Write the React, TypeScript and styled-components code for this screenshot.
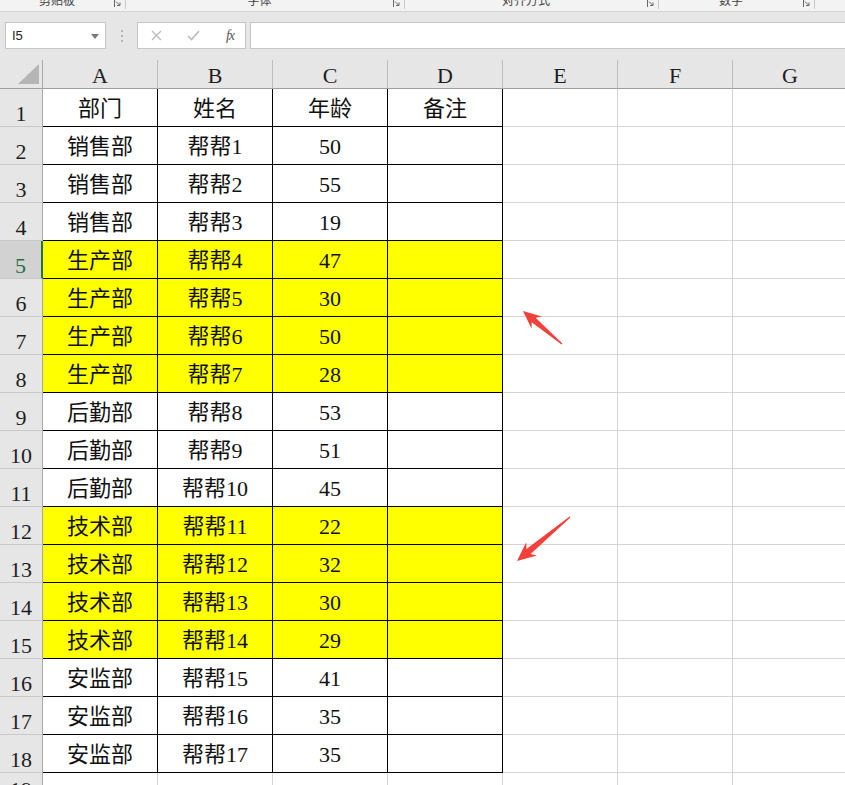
import React from "react";
import styled, { createGlobalStyle } from "styled-components";

const GlobalStyle = createGlobalStyle`
  html, body { margin: 0; padding: 0; background: #ffffff; overflow: hidden; }
  * { box-sizing: border-box; }
`;

const SERIF = `"Liberation Serif", "Noto Sans CJK SC", serif`;
const CJK = `"Noto Sans CJK SC", "Liberation Sans", sans-serif`;

const Page = styled.div`
  position: relative;
  width: 845px;
  height: 785px;
  overflow: hidden;
  background: #fff;
`;

/* ---------- ribbon strip ---------- */
const Ribbon = styled.div`
  display: flex;
  height: 12px;
  background: #f3f3f3;
  border-bottom: 1px solid #d5d5d5;
  overflow: hidden;
`;

const RibbonGroup = styled.div<{ $w: number }>`
  display: flex;
  align-items: flex-start;
  width: ${(p) => p.$w}px;
  flex: none;
  border-right: 1px solid #c8c8c8;
  height: 9px;
  padding-right: 4px;
`;

const GroupLabel = styled.div`
  flex: 1;
  text-align: center;
  font-family: ${CJK};
  font-size: 12px;
  line-height: 12px;
  color: #444;
  margin-top: -6px;
`;

const Launcher = styled.svg`
  width: 7px;
  height: 8px;
  flex: none;
`;

/* ---------- formula bar ---------- */
const FormulaBar = styled.div`
  display: flex;
  align-items: flex-start;
  height: 48px;
  padding: 10px 0 0 5px;
  background: #e6e6e6;
`;

const NameBox = styled.div`
  display: flex;
  align-items: center;
  justify-content: space-between;
  width: 101px;
  height: 27px;
  background: #fff;
  border: 1px solid #c6c6c6;
  padding: 0 6px 0 6px;
  font-family: "Liberation Sans", sans-serif;
  font-size: 13px;
  color: #222;
  flex: none;
`;

const DropArrow = styled.span`
  width: 0;
  height: 0;
  border-left: 4px solid transparent;
  border-right: 4px solid transparent;
  border-top: 5px solid #7a7a7a;
  margin-top: 1px;
`;

const Dots = styled.div`
  display: flex;
  flex-direction: column;
  gap: 3px;
  width: 31px;
  align-items: center;
  padding-top: 8px;
  flex: none;
`;

const Dot = styled.span`
  width: 2px;
  height: 2px;
  background: #b4b4b4;
`;

const FxBox = styled.div`
  display: flex;
  align-items: center;
  justify-content: space-between;
  width: 109px;
  height: 27px;
  background: #fff;
  border: 1px solid #c6c6c6;
  padding: 0 11px 0 13px;
  flex: none;
`;

const FxText = styled.span`
  font-family: ${SERIF};
  font-style: italic;
  font-size: 14px;
  color: #555;
  letter-spacing: -1px;
`;

const FormulaInput = styled.div`
  flex: 1;
  height: 27px;
  margin-left: 4px;
  background: #fff;
  border: 1px solid #c6c6c6;
  border-right: none;
`;

/* ---------- sheet ---------- */
const Sheet = styled.div`
  display: grid;
  grid-template-columns: 43px repeat(7, 115px);
  grid-template-rows: 29px repeat(18, 38px) 30px;
  width: 848px;
`;

const Corner = styled.div`
  background: #e6e6e6;
  border-right: 1px solid #a8a8a8;
  border-bottom: 1px solid #9e9e9e;
`;

const CornerTri = styled.svg`
  display: block;
  width: 42px;
  height: 28px;
`;

const ColHead = styled.div`
  display: flex;
  align-items: center;
  justify-content: center;
  padding-top: 3px;
  background: #e6e6e6;
  border-right: 1px solid #bdbdbd;
  border-bottom: 1px solid #9e9e9e;
  font-family: ${SERIF};
  font-size: 22px;
  color: #1e1e1e;
`;

const RowHead = styled.div<{ $sel?: boolean }>`
  display: flex;
  align-items: flex-end;
  justify-content: center;
  padding-bottom: 1px;
  background: ${(p) => (p.$sel ? "#d2d2d2" : "#e6e6e6")};
  border-right: ${(p) => (p.$sel ? "2px solid #217346" : "1px solid #a8a8a8")};
  border-bottom: 1px solid #c9c9c9;
  font-family: ${SERIF};
  font-size: 22px;
  line-height: 22px;
  color: ${(p) => (p.$sel ? "#217346" : "#1e1e1e")};
`;

const Cell = styled.div<{ $table?: boolean; $fill?: boolean }>`
  display: flex;
  align-items: center;
  justify-content: center;
  padding-top: 3px;
  background: ${(p) => (p.$fill ? "#ffff00" : "#ffffff")};
  border-right: 1px solid ${(p) => (p.$table ? "#000000" : "#d4d4d4")};
  border-bottom: 1px solid ${(p) => (p.$table ? "#000000" : "#d4d4d4")};
  font-family: ${SERIF};
  font-size: 22px;
  line-height: 22px;
  color: #111;
  white-space: nowrap;
`;

const Overlay = styled.svg`
  position: absolute;
  left: 0;
  top: 0;
  width: 845px;
  height: 785px;
  pointer-events: none;
`;

/* ---------- data ---------- */
type Row = { a: string; b: string; c: string; d: string; fill: boolean };

const rows: Row[] = [
  { a: "部门", b: "姓名", c: "年龄", d: "备注", fill: false },
  { a: "销售部", b: "帮帮1", c: "50", d: "", fill: false },
  { a: "销售部", b: "帮帮2", c: "55", d: "", fill: false },
  { a: "销售部", b: "帮帮3", c: "19", d: "", fill: false },
  { a: "生产部", b: "帮帮4", c: "47", d: "", fill: true },
  { a: "生产部", b: "帮帮5", c: "30", d: "", fill: true },
  { a: "生产部", b: "帮帮6", c: "50", d: "", fill: true },
  { a: "生产部", b: "帮帮7", c: "28", d: "", fill: true },
  { a: "后勤部", b: "帮帮8", c: "53", d: "", fill: false },
  { a: "后勤部", b: "帮帮9", c: "51", d: "", fill: false },
  { a: "后勤部", b: "帮帮10", c: "45", d: "", fill: false },
  { a: "技术部", b: "帮帮11", c: "22", d: "", fill: true },
  { a: "技术部", b: "帮帮12", c: "32", d: "", fill: true },
  { a: "技术部", b: "帮帮13", c: "30", d: "", fill: true },
  { a: "技术部", b: "帮帮14", c: "29", d: "", fill: true },
  { a: "安监部", b: "帮帮15", c: "41", d: "", fill: false },
  { a: "安监部", b: "帮帮16", c: "35", d: "", fill: false },
  { a: "安监部", b: "帮帮17", c: "35", d: "", fill: false },
];

const groups = [
  { label: "剪贴板", w: 126 },
  { label: "字体", w: 279 },
  { label: "对齐方式", w: 254 },
  { label: "数字", w: 156 },
];

function arrowPoints(
  tail: [number, number],
  tip: [number, number],
  headLen: number,
  headHalf: number,
  shaftHead: number,
  shaftTail: number
): string {
  const dx = tip[0] - tail[0];
  const dy = tip[1] - tail[1];
  const L = Math.hypot(dx, dy);
  const ux = dx / L;
  const uy = dy / L;
  const nx = -uy;
  const ny = ux;
  const bx = tip[0] - ux * headLen;
  const by = tip[1] - uy * headLen;
  const nbx = tip[0] - ux * (headLen - 4);
  const nby = tip[1] - uy * (headLen - 4);
  const pts: [number, number][] = [
    [tail[0] + nx * shaftTail, tail[1] + ny * shaftTail],
    [nbx + nx * shaftHead, nby + ny * shaftHead],
    [bx + nx * headHalf, by + ny * headHalf],
    [tip[0], tip[1]],
    [bx - nx * headHalf, by - ny * headHalf],
    [nbx - nx * shaftHead, nby - ny * shaftHead],
    [tail[0] - nx * shaftTail, tail[1] - ny * shaftTail],
  ];
  return pts.map((p) => `${p[0].toFixed(1)},${p[1].toFixed(1)}`).join(" ");
}

const cols = ["A", "B", "C", "D", "E", "F", "G"];

export default function App() {
  return (
    <Page>
      <GlobalStyle />
      <Ribbon>
        {groups.map((g) => (
          <RibbonGroup key={g.label} $w={g.w}>
            <GroupLabel>{g.label}</GroupLabel>
            <Launcher viewBox="0 0 7 8">
              <path d="M0.5 0 V7" stroke="#666" strokeWidth="1" fill="none" />
              <path d="M2 1.5 L5.5 5" stroke="#666" strokeWidth="1" fill="none" />
              <path d="M6 2.5 V5.5 H3" stroke="#666" strokeWidth="1" fill="none" />
            </Launcher>
          </RibbonGroup>
        ))}
      </Ribbon>

      <FormulaBar>
        <NameBox>
          <span>I5</span>
          <DropArrow />
        </NameBox>
        <Dots>
          <Dot />
          <Dot />
          <Dot />
        </Dots>
        <FxBox>
          <svg width="11" height="11" viewBox="0 0 11 11">
            <path d="M1 1 L10 10 M10 1 L1 10" stroke="#bcbcbc" strokeWidth="1.4" />
          </svg>
          <svg width="13" height="11" viewBox="0 0 13 11">
            <path d="M1 6 L4.5 9.5 L12 1" stroke="#bcbcbc" strokeWidth="1.6" fill="none" />
          </svg>
          <FxText>fx</FxText>
        </FxBox>
        <FormulaInput />
      </FormulaBar>

      <Sheet>
        <Corner>
          <CornerTri viewBox="0 0 42 28">
            <polygon points="18,24 39,24 39,4" fill="#b5b5b5" />
          </CornerTri>
        </Corner>
        {cols.map((c) => (
          <ColHead key={c}>{c}</ColHead>
        ))}

        {rows.map((r, i) => (
          <React.Fragment key={i}>
            <RowHead $sel={i === 4}>{i + 1}</RowHead>
            <Cell $table $fill={r.fill}>{r.a}</Cell>
            <Cell $table $fill={r.fill}>{r.b}</Cell>
            <Cell $table $fill={r.fill}>{r.c}</Cell>
            <Cell $table $fill={r.fill}>{r.d}</Cell>
            <Cell />
            <Cell />
            <Cell />
          </React.Fragment>
        ))}

        <RowHead>19</RowHead>
        {cols.map((c) => (
          <Cell key={c} />
        ))}
      </Sheet>

      <Overlay viewBox="0 0 845 785">
        <polygon points={arrowPoints([562, 344], [523, 311], 18, 8, 3, 0.6)} fill="#f2403a" />
        <polygon points={arrowPoints([570, 517], [517, 561], 19, 8.5, 3.2, 0.6)} fill="#f2403a" />
      </Overlay>
    </Page>
  );
}
